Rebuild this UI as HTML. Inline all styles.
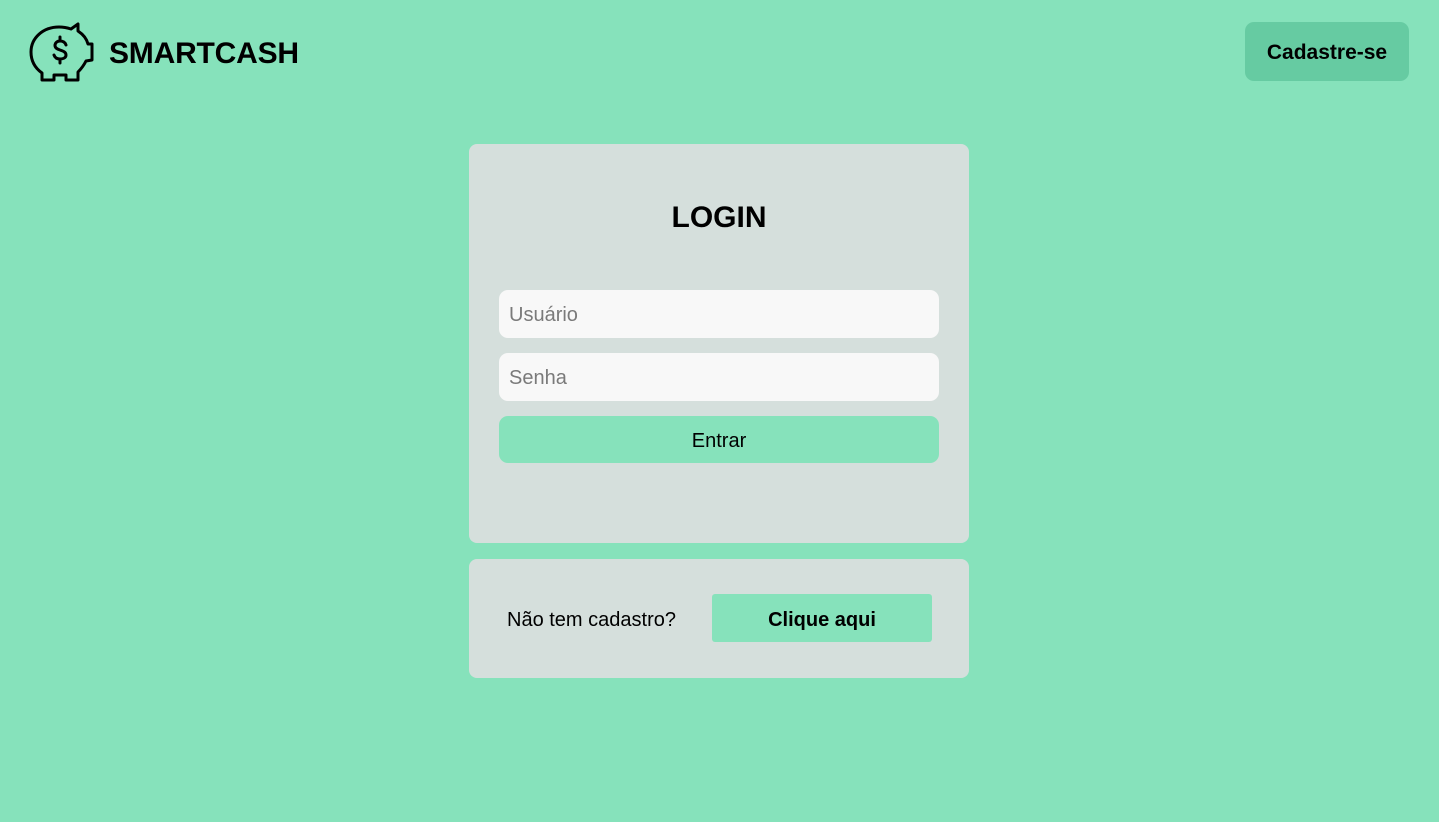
<!DOCTYPE html>
<html><head><meta charset="utf-8"><style>
*{box-sizing:border-box;margin:0;padding:0}
body{width:1439px;height:822px;background:#86e2bb;font-family:"Liberation Sans",sans-serif;position:relative;overflow:hidden;color:#000}
.logo{position:absolute;left:28px;top:18px}
.brand{position:absolute;left:109px;top:37px;font-size:30px;font-weight:bold;letter-spacing:-0.2px}
.cad{position:absolute;left:1245px;top:22px;width:164px;height:59px;background:#66cba2;border-radius:9px;font-size:21px;font-weight:bold;text-align:center;line-height:61px}
.card{position:absolute;left:469px;width:500px;background:#d5dfdc;border-radius:8px}
.c1{top:144px;height:399px}
.c2{top:559px;height:119px}
h1{position:absolute;top:57px;width:100%;text-align:center;font-size:30px;font-weight:bold}
.inp{position:absolute;left:30px;width:440px;height:48px;background:#f8f8f8;border-radius:9px;font-size:20px;color:#7a7a7a;padding-left:10px;line-height:51px}
.btn{position:absolute;left:30px;top:272px;width:440px;height:47px;background:#86e2bb;border-radius:9px;text-align:center;line-height:51px;font-size:20px}
.q{position:absolute;left:38px;top:50px;font-size:20px}
.ca{position:absolute;left:243px;top:35px;width:220px;height:48px;background:#86e2bb;border-radius:3px;text-align:center;line-height:52px;font-size:20px;font-weight:bold}
</style></head><body>
<svg class="logo" width="68" height="66" viewBox="0 0 68 66" fill="none" stroke="#000" stroke-width="3" stroke-linejoin="round" stroke-linecap="round">
<path d="M50 6 L50 13 C56 17 59 22 60 26 L64 26 L64 42 L58 43 C55 49 52 52 50 54 L50 62 L38 62 L38 57 L26 57 L26 62 L14 62 L14 55 C7 50 3 43 3 34 C3 20 15 9 31 9 C36 9 40 10 43 11 Z"/>
<path d="M38 27 C37 24 35 23 32 23 C29 23 27 25 27 27.5 C27 30 29 31 32 32 C35 33 38 34 38 37 C38 40 35 41 32 41 C29 41 27 40 26 37 M32 19 L32 23 M32 41 L32 45"/>
</svg>
<div class="brand">SMARTCASH</div>
<div class="cad">Cadastre-se</div>
<div class="card c1">
<h1>LOGIN</h1>
<div class="inp" style="top:146px">Usuário</div>
<div class="inp" style="top:209px">Senha</div>
<div class="btn">Entrar</div>
</div>
<div class="card c2">
<div class="q">Não tem cadastro?</div>
<div class="ca">Clique aqui</div>
</div>
</body></html>
